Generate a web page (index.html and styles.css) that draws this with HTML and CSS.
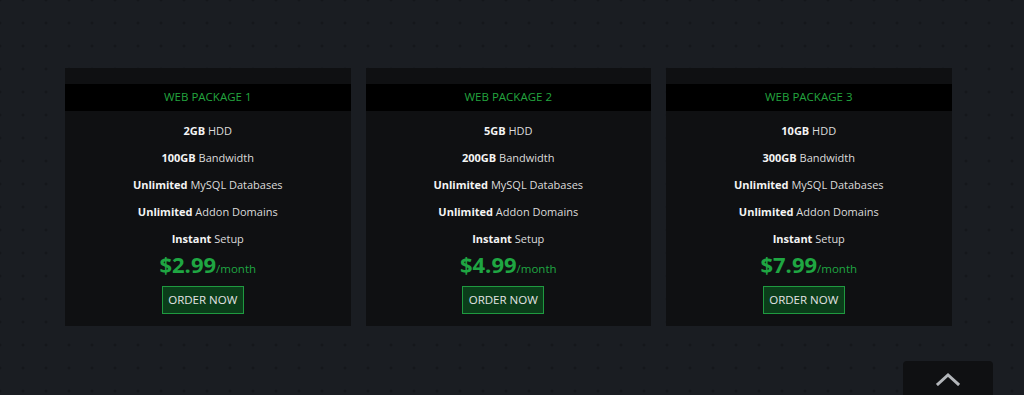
FILE: index.html
```html
<!DOCTYPE html>
<html>
<head>
<meta charset="utf-8">
<link rel="stylesheet" href="styles.css">
</head>
<body>
<div class="page">
  <div class="plans">
    <div class="card">
      <div class="card-head">WEB PACKAGE 1</div>
      <ul class="features">
        <li><b>2GB</b> HDD</li>
        <li><b>100GB</b> Bandwidth</li>
        <li><b>Unlimited</b> MySQL Databases</li>
        <li><b>Unlimited</b> Addon Domains</li>
        <li><b>Instant</b> Setup</li>
      </ul>
      <div class="price"><span class="amount">$2.99</span><span class="per">/month</span></div>
      <a class="order" href="#">ORDER NOW</a>
    </div>
    <div class="card">
      <div class="card-head">WEB PACKAGE 2</div>
      <ul class="features">
        <li><b>5GB</b> HDD</li>
        <li><b>200GB</b> Bandwidth</li>
        <li><b>Unlimited</b> MySQL Databases</li>
        <li><b>Unlimited</b> Addon Domains</li>
        <li><b>Instant</b> Setup</li>
      </ul>
      <div class="price"><span class="amount">$4.99</span><span class="per">/month</span></div>
      <a class="order" href="#">ORDER NOW</a>
    </div>
    <div class="card">
      <div class="card-head">WEB PACKAGE 3</div>
      <ul class="features">
        <li><b>10GB</b> HDD</li>
        <li><b>300GB</b> Bandwidth</li>
        <li><b>Unlimited</b> MySQL Databases</li>
        <li><b>Unlimited</b> Addon Domains</li>
        <li><b>Instant</b> Setup</li>
      </ul>
      <div class="price"><span class="amount">$7.99</span><span class="per">/month</span></div>
      <a class="order" href="#">ORDER NOW</a>
    </div>
  </div>
</div>
<a class="to-top" href="#">
  <svg width="24" height="14" viewBox="0 0 24 14"><path d="M2 12 L12 3 L22 12" fill="none" stroke="#b3b6ba" stroke-width="3" stroke-linecap="square"/></svg>
</a>
</body>
</html>
```
FILE: styles.css
```css
html, body {
  margin: 0;
  height: 100%;
}
body {
  background-color: #1a1d22;
  background-image: radial-gradient(circle, #111316 0.9px, transparent 1.3px);
  background-size: 23px 23px;
  background-position: -11.5px -11.5px;
  font-family: "Open Sans", "Noto Sans", sans-serif;
  color: #dcdcdc;
  overflow: hidden;
}
.page {
  padding: 68px 0 0 65px;
}
.plans {
  display: flex;
  gap: 15px;
}
.card {
  width: 285.5px;
  background: #0f1012;
  padding: 16px 0 12px;
  display: flex;
  flex-direction: column;
  align-items: center;
  box-sizing: border-box;
}
.card-head {
  align-self: stretch;
  height: 27px;
  line-height: 26px;
  background: #000;
  color: #23a53f;
  text-align: center;
  font-size: 11.5px;
}
.features {
  list-style: none;
  margin: 0;
  padding: 6px 0 0;
  text-align: center;
  font-size: 11px;
}
.features li {
  height: 27px;
  line-height: 27px;
}
.features b {
  font-weight: 700;
  color: #f4f4f4;
}
.price {
  color: #1fa642;
  height: 30px;
  line-height: 30px;
  margin-top: -3px;
}
.amount {
  font-size: 22px;
  font-weight: 700;
}
.per {
  font-size: 11.5px;
  font-weight: 400;
}
.order {
  margin-top: 7px;
  margin-right: 10px;
  display: block;
  width: 82px;
  height: 28px;
  box-sizing: border-box;
  line-height: 26px;
  text-align: center;
  background: #0b3d1a;
  border: 1px solid #1f9a40;
  color: #e4e4e4;
  text-decoration: none;
  font-size: 11.5px;
}
.to-top {
  position: fixed;
  left: 903px;
  top: 361px;
  width: 90px;
  height: 40px;
  background: #0f1012;
  border-radius: 4px 4px 0 0;
  display: flex;
  justify-content: center;
  padding-top: 11px;
  box-sizing: border-box;
}
```
